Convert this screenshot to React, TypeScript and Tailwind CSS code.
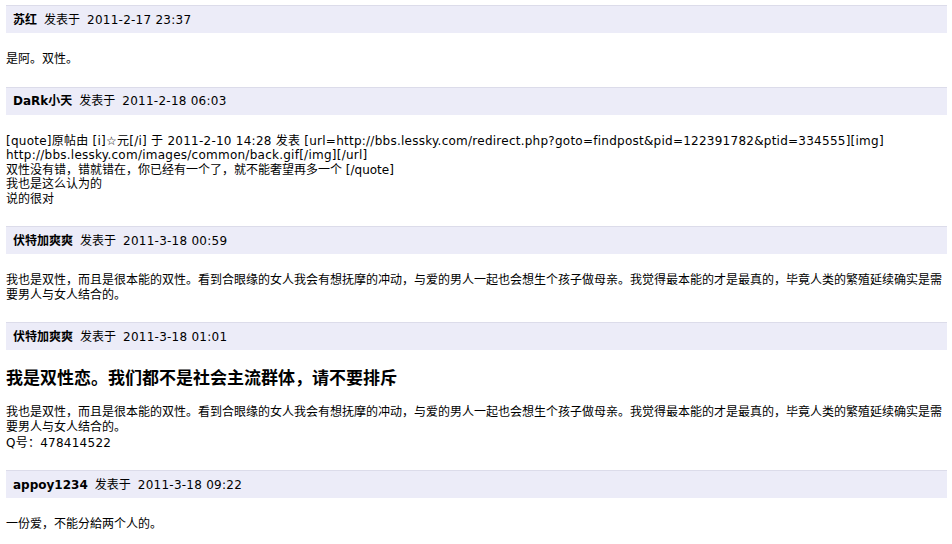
const posts = [
  {
    author: "苏红",
    time: "2011-2-17 23:37",
    lines: ["是阿。双性。"],
  },
  {
    author: "DaRk小天",
    time: "2011-2-18 06:03",
    lines: [
      "[quote]原帖由 [i]☆元[/i] 于 2011-2-10 14:28 发表 [url=http://bbs.lessky.com/redirect.php?goto=findpost&pid=122391782&ptid=334555][img]",
      "http://bbs.lessky.com/images/common/back.gif[/img][/url]",
      "双性没有错，错就错在，你已经有一个了，就不能奢望再多一个 [/quote]",
      "我也是这么认为的",
      "说的很对",
    ],
    latin: [0, 1],
  },
  {
    author: "伏特加爽爽",
    time: "2011-3-18 00:59",
    lines: [
      "我也是双性，而且是很本能的双性。看到合眼缘的女人我会有想抚摩的冲动，与爱的男人一起也会想生个孩子做母亲。我觉得最本能的才是最真的，毕竟人类的繁殖延续确实是需",
      "要男人与女人结合的。",
    ],
  },
  {
    author: "伏特加爽爽",
    time: "2011-3-18 01:01",
    heading: "我是双性恋。我们都不是社会主流群体，请不要排斥",
    lines: [
      "我也是双性，而且是很本能的双性。看到合眼缘的女人我会有想抚摩的冲动，与爱的男人一起也会想生个孩子做母亲。我觉得最本能的才是最真的，毕竟人类的繁殖延续确实是需",
      "要男人与女人结合的。",
    ],
    extra: "Q号：478414522",
  },
  {
    author: "appoy1234",
    time: "2011-3-18 09:22",
    lines: ["一份爱，不能分給两个人的。"],
  },
];

export default function App() {
  return (
    <div className="w-[952px] h-[544px] overflow-hidden bg-white pt-[5px] pl-[6px] pr-[5px] text-[12px] text-black font-['DejaVu_Sans','Noto_Sans_CJK_SC',sans-serif]">
      {posts.map((post, i) => (
        <div key={i}>
          {/* post header bar */}
          <div className="h-[28px] flex items-center pl-[7px] bg-[#ececf8] border-t border-[#dcdcea] whitespace-nowrap">
            <span className="font-bold mr-[7px]">{post.author}</span>
            <span className="mr-[7px]">发表于</span>
            <span className="tracking-[0.25px]">{post.time}</span>
          </div>

          {/* post body */}
          <div className="pt-[19px] pb-[20px] whitespace-nowrap">
            {post.heading && (
              <h2 className="h-[22px] text-[17px] font-bold leading-[22px] -mt-[2px] mb-[16px]">
                {post.heading}
              </h2>
            )}
            {post.lines.map((line, j) => (
              <div
                key={j}
                className={
                  post.latin?.includes(j)
                    ? "h-[14.5px] leading-[14.5px] tracking-[0.25px]"
                    : "h-[14.5px] leading-[14.5px]"
                }
              >
                {line}
              </div>
            ))}
            {post.extra && (
              <div className="h-[16px] leading-[18px] tracking-[0.25px]">{post.extra}</div>
            )}
          </div>
        </div>
      ))}
    </div>
  );
}
